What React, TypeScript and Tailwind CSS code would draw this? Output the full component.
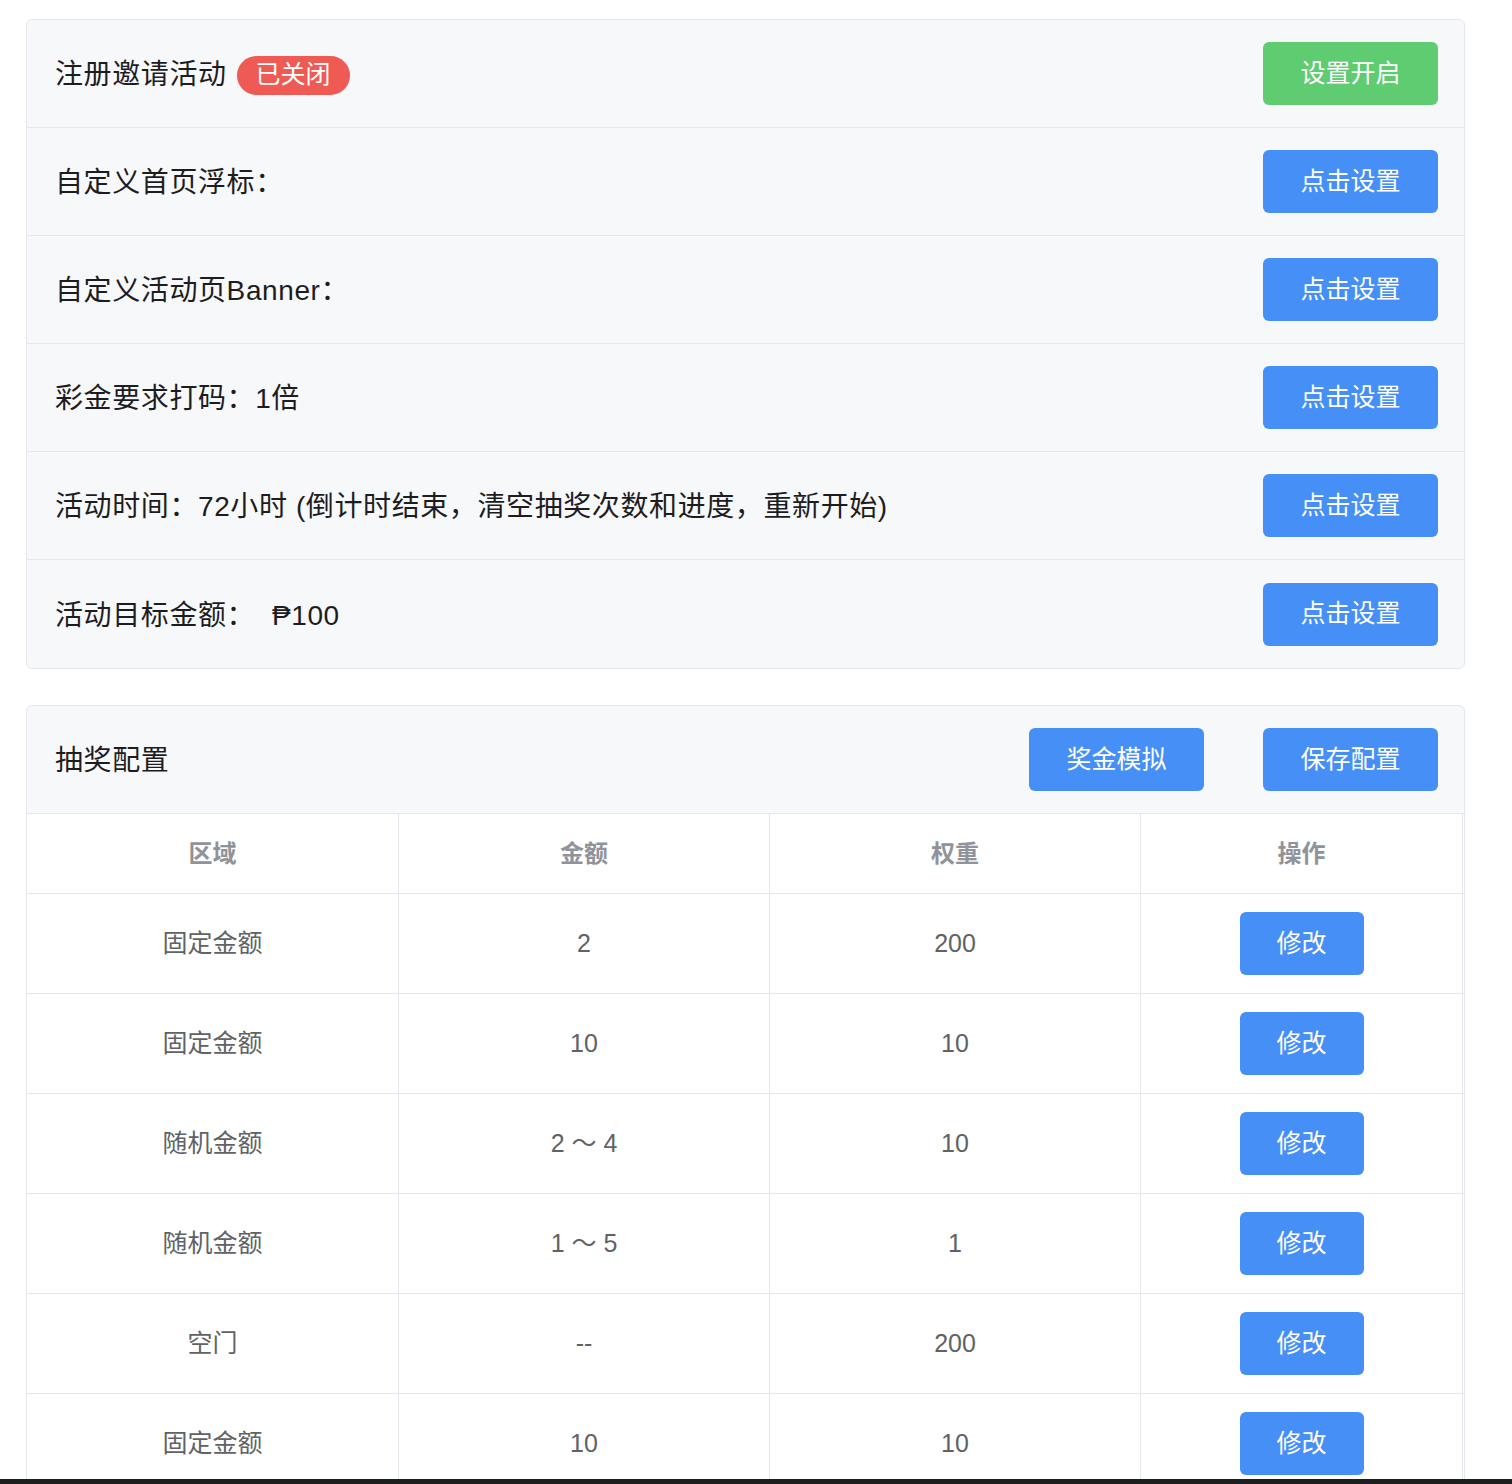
const font = { fontFamily: '"Liberation Sans", "Noto Sans CJK SC", sans-serif' }

type SettingRow = { label: React.ReactNode; action: string; tone: 'green' | 'blue' }

const settings: SettingRow[] = [
  {
    label: (
      <span className="flex items-center gap-[10px]">
        注册邀请活动
        <span className="flex h-[39px] items-center rounded-full bg-[#ef5a55] px-[19px] text-[25px] tracking-normal text-white">已关闭</span>
      </span>
    ),
    action: '设置开启',
    tone: 'green',
  },
  { label: '自定义首页浮标：', action: '点击设置', tone: 'blue' },
  { label: '自定义活动页Banner：', action: '点击设置', tone: 'blue' },
  { label: '彩金要求打码：1倍', action: '点击设置', tone: 'blue' },
  { label: '活动时间：72小时 (倒计时结束，清空抽奖次数和进度，重新开始)', action: '点击设置', tone: 'blue' },
  { label: '活动目标金额：  ₱100', action: '点击设置', tone: 'blue' },
]

const prizes = [
  { area: '固定金额', amount: '2', weight: '200' },
  { area: '固定金额', amount: '10', weight: '10' },
  { area: '随机金额', amount: '2 ～ 4', weight: '10' },
  { area: '随机金额', amount: '1 ～ 5', weight: '1' },
  { area: '空门', amount: '--', weight: '200' },
  { area: '固定金额', amount: '10', weight: '10' },
]

function Btn({ children, tone = 'blue', wide = true }: { children: React.ReactNode; tone?: 'green' | 'blue'; wide?: boolean }) {
  return (
    <button
      className={
        'flex h-[63px] items-center justify-center rounded-[6px] text-[25px] text-white ' +
        (wide ? 'w-[175px] ' : 'w-[124px] ') +
        (tone === 'green' ? 'bg-[#5fcc72]' : 'bg-[#468ff6]')
      }
    >
      {children}
    </button>
  )
}

const cols = 'grid grid-cols-[372px_371px_371px_322px]'

export default function App() {
  return (
    <div className="relative h-[1484px] overflow-hidden bg-white" style={font}>
      <div className="flex w-[1465px] flex-col gap-[36px] pl-[26px] pt-[19px]">
        <div className="overflow-hidden rounded-[6px] border border-[#e4e7ed] bg-[#f7f8fa]">
          {settings.map((s, i) => (
            <div
              key={i}
              className={
                'flex h-[108px] items-center justify-between pl-[28px] pr-[26px] ' +
                (i < settings.length - 1 ? 'border-b border-[#e4e7ed]' : '')
              }
            >
              <div className="whitespace-pre pt-[3px] text-[28px] tracking-[0.6px] text-[#1d1d1f]">{s.label}</div>
              <Btn tone={s.tone}>{s.action}</Btn>
            </div>
          ))}
        </div>

        <div className="overflow-hidden rounded-t-[6px] border border-[#e4e7ed] bg-[#f7f8fa]">
          <div className="flex h-[108px] items-center border-b border-[#e4e7ed] pl-[28px] pr-[26px]">
            <div className="pt-[3px] text-[28px] tracking-[0.6px] text-[#1d1d1f]">抽奖配置</div>
            <div className="ml-auto flex gap-[59px]">
              <Btn>奖金模拟</Btn>
              <Btn>保存配置</Btn>
            </div>
          </div>
          <div className="bg-white">
            <div className={cols + ' h-[80px] border-b border-[#e4e7ed] text-[24px] font-semibold text-[#909399]'}>
              {['区域', '金额', '权重', '操作'].map((h) => (
                <div key={h} className="flex items-center justify-center border-r border-[#e4e7ed]">
                  {h}
                </div>
              ))}
            </div>
            {prizes.map((p, i) => (
              <div key={i} className={cols + ' h-[100px] border-b border-[#e4e7ed] text-[25px] text-[#606266]'}>
                <div className="flex items-center justify-center border-r border-[#e4e7ed]">{p.area}</div>
                <div className="flex items-center justify-center border-r border-[#e4e7ed]">{p.amount}</div>
                <div className="flex items-center justify-center border-r border-[#e4e7ed]">{p.weight}</div>
                <div className="flex items-center justify-center border-r border-[#e4e7ed]">
                  <Btn wide={false}>修改</Btn>
                </div>
              </div>
            ))}
          </div>
        </div>
      </div>
      <div className="absolute bottom-0 left-0 h-[5px] w-full bg-[#1c1f1e]" />
    </div>
  )
}
